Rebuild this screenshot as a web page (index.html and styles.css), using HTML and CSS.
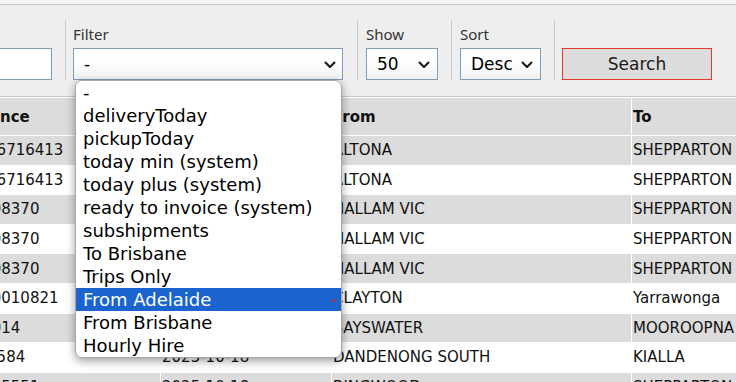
FILE: index.html
```html
<!DOCTYPE html>
<html lang="en">
<head>
  <meta charset="UTF-8">
  <meta name="viewport" content="width=device-width, initial-scale=1">
  <title>Shipments</title>
  <link rel="stylesheet" href="styles.css">
</head>
<body>
  <div class="topstrip"></div>

  <div class="toolbar">
    <div class="group group-ref">
      <label for="ref">Reference</label>
      <input type="text" id="ref" class="field">
    </div>

    <div class="group group-filter">
      <label>Filter</label>
      <div class="select select-filter">
        <span>-</span>
        <svg width="12" height="7" viewBox="0 0 12 7"><polyline points="1,1 6,6 11,1" fill="none" stroke="#1a1a1a" stroke-width="2.2"/></svg>
      </div>
      <ul class="popup">
        <li>-</li>
        <li>deliveryToday</li>
        <li>pickupToday</li>
        <li>today min (system)</li>
        <li>today plus (system)</li>
        <li>ready to invoice (system)</li>
        <li>subshipments</li>
        <li>To Brisbane</li>
        <li>Trips Only</li>
        <li class="active">From Adelaide<span class="dot"></span></li>
        <li>From Brisbane</li>
        <li>Hourly Hire</li>
      </ul>
    </div>

    <div class="group">
      <label>Show</label>
      <div class="select select-show">
        <span>50</span>
        <svg width="12" height="7" viewBox="0 0 12 7"><polyline points="1,1 6,6 11,1" fill="none" stroke="#1a1a1a" stroke-width="2.2"/></svg>
      </div>
    </div>

    <div class="group">
      <label>Sort</label>
      <div class="select select-sort">
        <span>Desc</span>
        <svg width="12" height="7" viewBox="0 0 12 7"><polyline points="1,1 6,6 11,1" fill="none" stroke="#1a1a1a" stroke-width="2.2"/></svg>
      </div>
    </div>

    <div class="group group-last">
      <button class="search-btn">Search</button>
    </div>
  </div>

  <table class="grid">
    <thead>
      <tr>
        <th class="c-ref">Reference</th>
        <th class="c-date">Date</th>
        <th class="c-from">From</th>
        <th class="c-to">To</th>
      </tr>
    </thead>
    <tbody>
      <tr><td>CON006716413</td><td>2025-10-20</td><td>ALTONA</td><td>SHEPPARTON</td></tr>
      <tr><td>CON006716413</td><td>2025-10-20</td><td>ALTONA</td><td>SHEPPARTON</td></tr>
      <tr><td>1045208370</td><td>2025-10-20</td><td>HALLAM VIC</td><td>SHEPPARTON</td></tr>
      <tr><td>1045208370</td><td>2025-10-19</td><td>HALLAM VIC</td><td>SHEPPARTON</td></tr>
      <tr><td>1045208370</td><td>2025-10-19</td><td>HALLAM VIC</td><td>SHEPPARTON</td></tr>
      <tr><td>100000010821</td><td>2025-10-19</td><td>CLAYTON</td><td>Yarrawonga</td></tr>
      <tr><td>10000014</td><td>2025-10-18</td><td>BAYSWATER</td><td>MOOROOPNA</td></tr>
      <tr><td>CON00584</td><td>2025-10-18</td><td>DANDENONG SOUTH</td><td>KIALLA</td></tr>
      <tr><td>1000005551</td><td>2025-10-18</td><td>RINGWOOD</td><td>SHEPPARTON</td></tr>
    </tbody>
  </table>
</body>
</html>
```

FILE: styles.css
```css
html, body {
  margin: 0;
  padding: 0;
}
body {
  overflow: hidden;
  background: #ffffff;
  font-family: "DejaVu Sans", Verdana, sans-serif;
  color: #111;
}
.topstrip {
  height: 4px;
  background: #f4f4f4;
  border-bottom: 1px solid #c8c8c8;
}
.toolbar {
  display: flex;
  margin-left: -120px;
  padding: 15px 0 16px;
  background: #eeeeee;
  border-bottom: 1px solid #c8c8c8;
}
.group {
  position: relative;
  display: flex;
  flex-direction: column;
  justify-content: flex-end;
  height: 60px;
  padding: 0 13px 0 8px;
  border-right: 1px solid #c8c8c8;
}
.group-filter {
  padding-left: 7px;
  padding-right: 14px;
}
.group-last {
  border-right: none;
  padding-left: 7px;
}
.group label {
  font-family: "Noto Sans", "Open Sans", sans-serif;
  font-size: 15px;
  line-height: 20px;
  color: #333;
  margin-bottom: 4px;
}
.field {
  box-sizing: border-box;
  width: 164px;
  height: 32px;
  margin: 0;
  border: 1px solid #7f9db9;
  background: #fff;
}
.select {
  box-sizing: border-box;
  display: flex;
  align-items: center;
  justify-content: space-between;
  height: 32px;
  padding: 0 7px 0 10px;
  border: 1px solid #7f9db9;
  background: linear-gradient(#ffffff, #ffffff 45%, #f1f1f1);
  font-size: 17px;
  color: #000;
}
.select-filter {
  width: 270px;
  padding-right: 6px;
}
.select-show {
  width: 72px;
}
.select-sort {
  width: 81px;
}
.search-btn {
  box-sizing: border-box;
  width: 150px;
  height: 32px;
  margin: 0;
  border: 1px solid #e3392a;
  background: #dcdcdc;
  font-family: "DejaVu Sans", Verdana, sans-serif;
  font-size: 17px;
  color: #1a1a1a;
}
.popup {
  position: absolute;
  top: 100%;
  left: 9px;
  z-index: 5;
  width: 267px;
  box-sizing: border-box;
  margin: 0;
  padding: 0;
  list-style: none;
  background: #fff;
  border: 1px solid #a6a6a6;
  border-radius: 7px;
  box-shadow: 0 3px 10px rgba(0, 0, 0, 0.38);
  overflow: hidden;
  font-size: 18px;
  color: #000;
}
.popup li {
  position: relative;
  height: 23px;
  line-height: 23px;
  padding-left: 7px;
  white-space: nowrap;
}
.popup li.active {
  background: #1b64cf;
  color: #fff;
}
.dot {
  position: absolute;
  right: 6px;
  top: 11px;
  width: 3px;
  height: 3px;
  border-radius: 50%;
  background: #e42222;
}
.grid {
  border-collapse: collapse;
  margin-left: -58px;
  font-size: 15px;
  color: #111;
  table-layout: fixed;
  width: 840px;
}
.grid th, .grid td {
  box-sizing: border-box;
  border: 1px solid #fff;
  padding: 0 1px;
  text-align: left;
  white-space: nowrap;
  overflow: hidden;
}
.grid th {
  height: 38px;
  background: #dcdcdc;
  font-weight: bold;
}
.grid td {
  height: 29.6px;
}
.grid tbody tr:nth-child(odd) td {
  background: #dcdcdc;
}
.grid tbody tr:nth-child(even) td {
  background: #fff;
}
.c-ref { width: 218px; }
.c-date { width: 171px; }
.c-from { width: 300px; }
.c-to { width: 151px; }
```
